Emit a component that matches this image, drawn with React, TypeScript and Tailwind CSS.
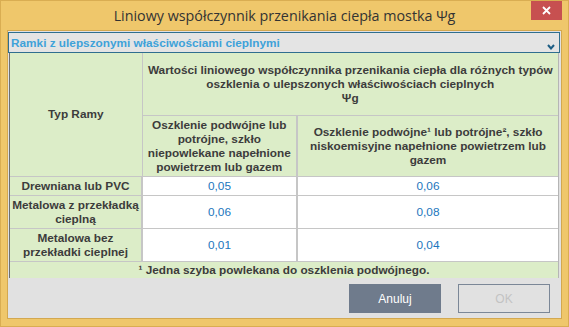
import React from 'react';

const cell = 'border border-[#c6c6c6] px-[2px] text-center align-middle whitespace-nowrap';

function Lines({ items }: { items: string[] }) {
  return (
    <>
      {items.map((t, i) => (
        <React.Fragment key={i}>
          {i > 0 && <br />}
          {t}
        </React.Fragment>
      ))}
    </>
  );
}

export default function App() {
  const rows = [
    { name: ['Drewniana lub PVC'], a: '0,05', b: '0,06', h: 'h-[19px]' },
    { name: ['Metalowa z przekładką', 'cieplną'], a: '0,06', b: '0,08', h: 'h-[33px]' },
    { name: ['Metalowa bez', 'przekładki cieplnej'], a: '0,01', b: '0,04', h: 'h-[33px]' },
  ];

  return (
    <div className="w-[569px] h-[327px] bg-[#efc76b] border border-[#d9ad52] flex flex-col font-['Liberation_Sans',Arial,sans-serif] overflow-hidden">
      {/* title bar */}
      <div className="relative h-[29px] shrink-0 flex items-center justify-center">
        <span className="font-['Open_Sans',sans-serif] text-[14.3px] text-[#333333]">
          Liniowy współczynnik przenikania ciepła mostka Ψg
        </span>
        <div className="absolute top-[-1px] right-[6px] w-[31px] h-[20px] bg-[#c75050] flex items-center justify-center">
          <svg width="9" height="9" viewBox="0 0 9 9">
            <path d="M1 1L8 8M8 1L1 8" stroke="#ffffff" strokeWidth="1.8" />
          </svg>
        </div>
      </div>

      {/* client area */}
      <div className="flex-1 mx-[6px] mb-[7px] border border-[#d3a850] bg-[#e1e1e1] flex flex-col">
        {/* combo */}
        <div className="mt-[1px] mr-[1px] h-[21px] border border-[#2f6e8f] bg-[#e4e4e4] relative">
          <span className="absolute left-[2px] top-[2px] text-[11.8px] font-bold text-[#3ea2d9]">
            Ramki z ulepszonymi właściwościami cieplnymi
          </span>
          <svg className="absolute right-[4px] bottom-[2px]" width="8" height="6" viewBox="0 0 8 6">
            <path d="M1 1L4 4.5L7 1" stroke="#1d5d84" strokeWidth="2" fill="none" />
          </svg>
        </div>

        {/* table panel */}
        <div className="ml-[1px] mr-[2px] h-[225px] border-l border-[#6e6e6e] border-r border-r-[#b5b5b5] bg-[#e1e1e1] overflow-hidden">
          <table className="w-full table-fixed border-collapse text-[11.8px] leading-[14px] text-[#3c3c3c]">
            <colgroup>
              <col className="w-[132px]" />
              <col className="w-[155px]" />
              <col />
            </colgroup>
            <tbody>
              <tr className="h-[62px] bg-[#dcedc8] font-bold">
                <td rowSpan={2} className={`${cell} border-l-0 border-t-0`}>Typ Ramy</td>
                <td colSpan={2} className={`${cell} border-t-0 border-r-0`}>
                  <Lines
                    items={[
                      'Wartości liniowego współczynnika przenikania ciepła dla różnych typów',
                      'oszklenia o ulepszonych właściwościach cieplnych',
                      'Ψg',
                    ]}
                  />
                </td>
              </tr>
              <tr className="h-[61px] bg-[#dcedc8] font-bold">
                <td className={`${cell} border-r-2`}>
                  <Lines
                    items={['Oszklenie podwójne lub', 'potrójne, szkło', 'niepowlekane napełnione', 'powietrzem lub gazem']}
                  />
                </td>
                <td className={`${cell} border-r-0`}>
                  <Lines
                    items={[
                      'Oszklenie podwójne¹ lub potrójne², szkło',
                      'niskoemisyjne napełnione powietrzem lub',
                      'gazem',
                    ]}
                  />
                </td>
              </tr>
              {rows.map((r) => (
                <tr key={r.a + r.b} className={r.h}>
                  <td className={`${cell} border-l-0 border-r-2 px-0 bg-[#dcedc8] font-bold`}>
                    <Lines items={r.name} />
                  </td>
                  <td className={`${cell} border-r-2 bg-white text-[#1b76bd]`}>{r.a}</td>
                  <td className={`${cell} border-r-0 bg-white text-[#1b76bd]`}>{r.b}</td>
                </tr>
              ))}
              <tr className="h-[18px] bg-[#dcedc8] font-bold">
                <td colSpan={3} className={`${cell} border-l-0 border-r-0 border-b-0`}>
                  ¹ Jedna szyba powlekana do oszklenia podwójnego.
                </td>
              </tr>
            </tbody>
          </table>
        </div>

        {/* buttons */}
        <div className="flex justify-end gap-[17px] mt-[6px] mr-[11px]">
          <button className="w-[92px] h-[29px] bg-[#6f7b8c] text-white text-[12px]">Anuluj</button>
          <button className="w-[92px] h-[29px] border border-[#7b8797] bg-[#e1e1e1] text-[#c3c3c3] text-[12px]">OK</button>
        </div>
      </div>
    </div>
  );
}
